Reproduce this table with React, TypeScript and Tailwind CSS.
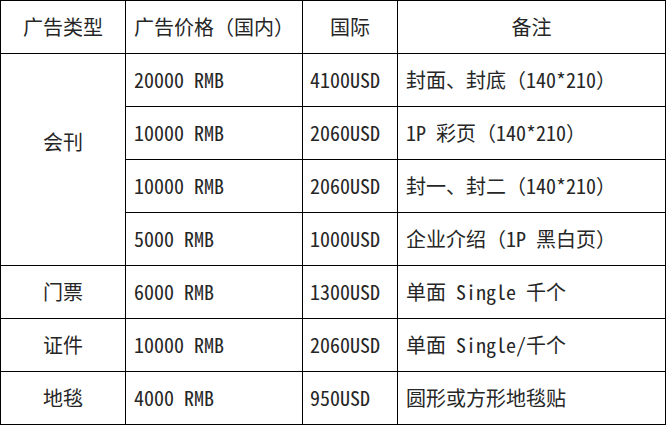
import React from "react";

type Row = {
  kind?: string;
  span?: number;
  cn: string;
  intl: string;
  note: string;
};

const rows: Row[] = [
  { kind: "会刊", span: 4, cn: "20000 RMB", intl: "4100USD", note: "封面、封底（140*210）" },
  { cn: "10000 RMB", intl: "2060USD", note: "1P 彩页（140*210）" },
  { cn: "10000 RMB", intl: "2060USD", note: "封一、封二（140*210）" },
  { cn: "5000 RMB", intl: "1000USD", note: "企业介绍（1P 黑白页）" },
  { kind: "门票", span: 1, cn: "6000 RMB", intl: "1300USD", note: "单面 Single 千个" },
  { kind: "证件", span: 1, cn: "10000 RMB", intl: "2060USD", note: "单面 Single/千个" },
  { kind: "地毯", span: 1, cn: "4000 RMB", intl: "950USD", note: "圆形或方形地毯贴" },
];

const cell = "border border-black px-2 h-[53px] whitespace-nowrap";

export default function App() {
  return (
    <div className="w-[667px] h-[425px] bg-white overflow-hidden">
      <table
        className="w-[666px] table-fixed border-collapse text-[20px] leading-none text-[#262626]"
        style={{ fontFamily: '"Noto Sans Mono CJK SC", "Noto Sans CJK SC", monospace' }}
      >
        <colgroup>
          <col className="w-[125px]" />
          <col className="w-[177px]" />
          <col className="w-[95px]" />
          <col className="w-[268px]" />
        </colgroup>
        <thead>
          <tr>
            <th className={`${cell} font-normal text-center`}>广告类型</th>
            <th className={`${cell} font-normal text-center`}>广告价格（国内）</th>
            <th className={`${cell} font-normal text-center`}>国际</th>
            <th className={`${cell} font-normal text-center`}>备注</th>
          </tr>
        </thead>
        <tbody>
          {rows.map((r, i) => (
            <tr key={i}>
              {r.kind && (
                <td
                  rowSpan={r.span}
                  className={`${cell} text-center ${r.span && r.span > 1 ? "pb-[36px]" : ""}`}
                >
                  {r.kind}
                </td>
              )}
              <td className={cell}>{r.cn}</td>
              <td className={`${cell} pl-[7px]`}>{r.intl}</td>
              <td className={cell}>{r.note}</td>
            </tr>
          ))}
        </tbody>
      </table>
    </div>
  );
}
